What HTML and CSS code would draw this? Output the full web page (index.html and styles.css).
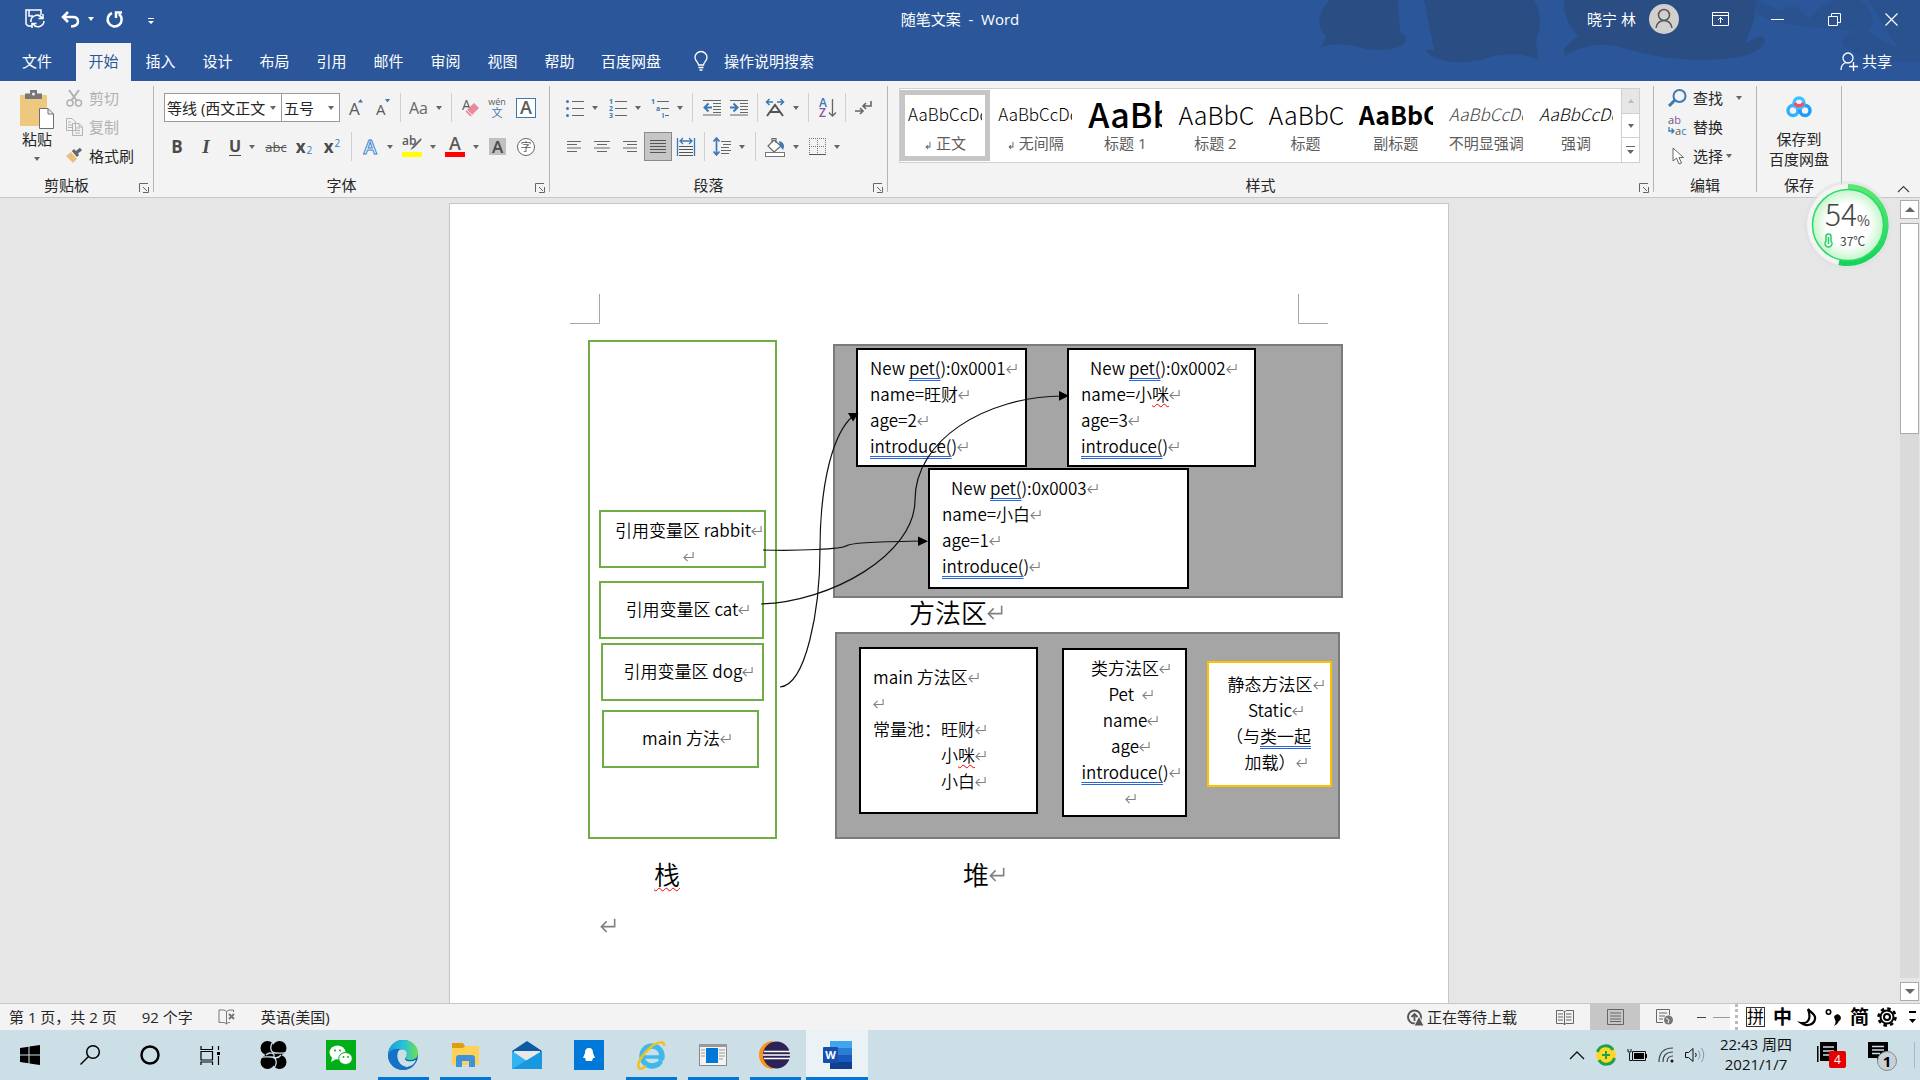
FILE: index.html
```html
<!DOCTYPE html>
<html lang="zh-CN">
<head>
  <meta charset="utf-8">
  <title>随笔文案 - Word</title>
  <link rel="stylesheet" href="styles.css">
</head>
<body>
  <svg class="defs" width="0" height="0">
    <symbol id="ret" viewBox="0 0 12 12"><path d="M11 0.500V6.500H1M5 2.500L1 6.500L5 10.500" fill="none" stroke="#808080" stroke-width="1.200"/></symbol>
    <symbol id="launch" viewBox="0 0 10 10"><path d="M0.500 9V0.500H9M4 4L8 8M9.500 4V9.500H4" fill="none" stroke="#666"/></symbol>
  </svg>

  <header class="header">
    <svg class="art" viewBox="1280 0 640 81" width="640" height="81">
      <path fill="#2a4d83" d="M1330 0C1316 14 1317 28 1326 36L1320 48Q1338 40 1366 49Q1392 52 1404 44Q1410 36 1400 32L1398 0zM1424 0L1434 50Q1420 48 1432 56Q1450 66 1480 60Q1515 48 1538 60L1536 40Q1545 20 1534 0zM1564 0Q1562 18 1578 36L1564 48L1565 56Q1590 40 1620 47Q1680 66 1740 57Q1766 50 1765 38Q1760 34 1745 44L1754 20L1756 0z"/>
      <path fill="#2a4f89" d="M1756 0L1780 10Q1800 0 1808 20Q1830 -8 1860 0Q1880 16 1868 32Q1880 40 1898 48L1900 58L1868 60L1842 45Q1842 34 1850 33L1860 32L1800 26Q1780 24 1756 14zM1868 0H1920V62H1890L1898 48z" opacity=".6"/>
    </svg>
    <div class="titlebar">
      <div class="quick">
        <button aria-label="保存"><svg width="20" height="20" viewBox="0 0 20 20" fill="none" stroke="#fff" stroke-width="1.5"><path d="M7 17H3L1 15V1H16V6M4 1V7H8M6 13a6 6 0 0 1 11-4M18 5V9.500H13.500M19 12a6 6 0 0 1-11 3M7 19V14.500H11.500"/></svg></button>
        <button class="undo" aria-label="撤消"><svg width="19" height="17" viewBox="0 0 19 17" fill="none" stroke="#fff" stroke-width="2.500"><path d="M7 1L2 6L7 11M2 6H12Q17 6 17 10.500T10 15.500"/></svg><i class="caret"></i></button>
        <button class="redo" aria-label="重复"><svg width="18" height="18" viewBox="0 0 18 18" fill="none" stroke="#fff" stroke-width="2.500"><path d="M6 3A7 7 0 1 0 13 4M10 8V2.500H16"/></svg></button>
        <button class="custom" aria-label="自定义快速访问工具栏"><svg width="6" height="7" viewBox="0 0 6 7"><path d="M0 0H6V1H0zM0 3H6L3 6z" fill="#fff"/></svg></button>
      </div>
      <h1 class="title">随笔文案&nbsp; -&nbsp; Word</h1>
      <div class="account">
        <span class="user">晓宁 林</span>
        <svg class="avatar" width="30" height="30" viewBox="0 0 30 30"><circle cx="15" cy="15" r="15" fill="#d2d0ce"/><g fill="none" stroke="#555" stroke-width="1.500"><circle cx="15" cy="11" r="5.500"/><path d="M7 24C8 14 22 14 23 24"/></g></svg>
        <button class="win" aria-label="功能区显示选项"><svg width="17" height="14" viewBox="0 0 17 14" fill="none" stroke="#fff"><path d="M0.500 0.500H16.500V13.500H0.500zM0.500 3.500H16.500M8.500 11V5.500M6 8L8.500 5.500L11 8"/></svg></button>
        <button class="win" aria-label="最小化"><svg width="13" height="13" viewBox="0 0 13 13"><path d="M0 6.500H13" stroke="#fff"/></svg></button>
        <button class="win" aria-label="还原"><svg width="13" height="13" viewBox="0 0 13 13" fill="none" stroke="#fff"><path d="M0.500 3.500H9.500V12.500H0.500zM3.500 3V0.500H12.500V9.500H10"/></svg></button>
        <button class="win" aria-label="关闭"><svg width="13" height="13" viewBox="0 0 13 13"><path d="M0.500 0.500L12.500 12.500M12.500 0.500L0.500 12.500" stroke="#fff" stroke-width="1.200"/></svg></button>
      </div>
    </div>
    <nav class="tabs">
      <button class="file">文件</button>
      <button class="tab active">开始</button>
      <button class="tab">插入</button>
      <button class="tab">设计</button>
      <button class="tab">布局</button>
      <button class="tab">引用</button>
      <button class="tab">邮件</button>
      <button class="tab">审阅</button>
      <button class="tab">视图</button>
      <button class="tab">帮助</button>
      <button class="tab long">百度网盘</button>
      <button class="tell"><svg width="14" height="20" viewBox="0 0 14 20" fill="none" stroke="#fff" stroke-width="1.300"><path d="M4.500 14C4.500 11 1 10 1 6.500A6 6 0 0 1 13 6.500C13 10 9.500 11 9.500 14zM4.500 16.500H9.500M5.500 19H8.500"/></svg>操作说明搜索</button>
      <button class="share"><svg width="18" height="19" viewBox="0 0 18 19" fill="none" stroke="#fff" stroke-width="1.300"><circle cx="8" cy="6" r="5"/><path d="M1 18C1 14 3 11.500 6 10.500M13.500 10V19M9 14.500H18"/></svg>共享</button>
    </nav>
  </header>

  <section class="ribbon">
    <div class="group clipboard">
      <div class="clip-body">
        <button class="paste">
          <svg width="34" height="39" viewBox="0 0 34 39"><rect y="5" width="27" height="31" rx="1" fill="#edc87e"/><path d="M5 9V3.500H10V0H17V3.500H22V9z" fill="#777"/><circle cx="13.500" cy="4" r="1.500" fill="#f3f3f3"/><path d="M19.500 18.500H28L33.500 24V38.500H19.500zM28 18.500V24H33.500" fill="#fff" stroke="#6f6f6f"/></svg>
          <span>粘贴</span>
          <i class="caret"></i>
        </button>
        <div class="stack">
          <button class="off"><svg width="17" height="18" viewBox="0 0 17 18" fill="none" stroke="#b1b1b1" stroke-width="1.500"><path d="M3 1L11 12M13 1L5 12" stroke-width="2"/><circle cx="4" cy="14" r="3"/><circle cx="12.500" cy="14" r="3"/></svg>剪切</button>
          <button class="off"><svg width="17" height="18" viewBox="0 0 17 18" fill="#f3f3f3" stroke="#b5b0b5"><path d="M0.500 0.500H6L9.500 4V12.500H0.500zM2 4H5M2 7H6M2 9.500H6M6.500 5.500H13L16.500 9V17.500H6.500zM13 5.500V9H16M9 10H14M9 12.500H14M9 15H14"/></svg>复制</button>
          <button><svg width="17" height="16" viewBox="0 0 17 16"><path d="M5 4L11 11L7 15L0 8z" fill="#edc07a"/><path d="M7 2L12 8" stroke="#666" stroke-width="3"/><path d="M10 5L15 1" stroke="#666" stroke-width="3.500"/></svg>格式刷</button>
        </div>
      </div>
      <div class="foot"><span>剪贴板</span><button aria-label="剪贴板设置"><svg width="10" height="10"><use href="#launch"/></svg></button></div>
    </div>
    <div class="divider"></div>

    <div class="group font">
      <div class="tools">
        <div class="row font-one">
          <select class="combo" aria-label="字体"><option>等线 (西文正文</option></select>
          <select class="combo size" aria-label="字号"><option>五号</option></select>
          <button><svg width="16" height="20" viewBox="0 0 16 20"><text x="1" y="17" class="g" font-size="17">A</text><path d="M10 4.500L12.500 1L15 4.500z" fill="#3b78b5"/></svg></button>
          <button><svg width="16" height="20" viewBox="0 0 16 20"><text x="1" y="17" class="g" font-size="15">A</text><path d="M10 1L12.500 4.500L15 1z" fill="#3b78b5"/></svg></button>
          <span class="line"></span>
          <button><span class="aa">Aa</span><i class="caret"></i></button>
          <span class="line"></span>
          <button><svg width="18" height="20" viewBox="0 0 18 20"><text x="0" y="12" class="g" font-size="14">A</text><path d="M12 5L17 10L8.500 18.500L3.500 13.500z" fill="#e9899a"/><path d="M5 12L10 17" stroke="#f3f3f3"/></svg></button>
          <button><svg width="20" height="20" viewBox="0 0 20 20"><text x="10" y="7" text-anchor="middle" class="g" font-size="9">wén</text><text x="10" y="19" text-anchor="middle" class="b" font-size="11">文</text></svg></button>
          <button><svg width="20" height="20" viewBox="0 0 20 20"><rect x=".5" y=".5" width="19" height="19" fill="#fff" stroke="#3b78b5"/><text x="10" y="16" text-anchor="middle" class="g" font-weight="600" font-size="18">A</text></svg></button>
        </div>
        <div class="row font-two">
          <button class="bold">B</button>
          <button class="italic">I</button>
          <button><span class="under">U</span><i class="caret"></i></button>
          <button class="strike">abc</button>
          <button class="script">x<sub>2</sub></button>
          <button class="script">x<sup>2</sup></button>
          <span class="line"></span>
          <button><svg width="18" height="20" viewBox="0 0 18 20"><text x="9" y="17" text-anchor="middle" font-family="Open Sans" font-weight="600" font-size="20" fill="#fff" stroke="#3b85cf">A</text></svg><i class="caret"></i></button>
          <button><svg width="20" height="21" viewBox="0 0 20 21"><text x="0" y="9" class="g" font-size="12" font-weight="600">ab</text><path d="M19 2L11 10L8 14L12 12L19.500 4z" fill="#666"/><rect y="16" width="20" height="5" fill="#ff0"/></svg><i class="caret"></i></button>
          <button><svg width="20" height="21" viewBox="0 0 20 21"><text x="10" y="14" text-anchor="middle" class="g" font-weight="600" font-size="18">A</text><rect y="16" width="20" height="5" fill="red"/></svg><i class="caret"></i></button>
          <button class="shade">A</button>
          <button><svg width="18" height="18" viewBox="0 0 18 18"><circle cx="9" cy="9" r="8.500" fill="#fff" stroke="#666"/><text x="9" y="13" text-anchor="middle" class="g" font-size="11">字</text></svg></button>
        </div>
      </div>
      <div class="foot"><span>字体</span><button aria-label="字体设置"><svg width="10" height="10"><use href="#launch"/></svg></button></div>
    </div>
    <div class="divider"></div>

    <div class="group para">
      <div class="tools">
        <div class="row para-one">
          <button><svg width="18" height="18" viewBox="0 0 18 18"><path d="M6 2.500H18M6 9.500H18M6 16.500H18" stroke="#666"/><g fill="#3b78b5"><circle cx="1.500" cy="2.500" r="1.500"/><circle cx="1.500" cy="9.500" r="1.500"/><circle cx="1.500" cy="16.500" r="1.500"/></g></svg><i class="caret"></i></button>
          <button><svg width="18" height="20" viewBox="0 0 18 20"><path d="M6 3.500H18M6 10.500H18M6 17.500H18" stroke="#666"/><g class="b" font-size="7" font-weight="700"><text x="0" y="6">1</text><text x="0" y="13">2</text><text x="0" y="20">3</text></g></svg><i class="caret"></i></button>
          <button><svg width="18" height="20" viewBox="0 0 18 20"><path d="M6 3.500H18M10 10.500H18M14 17.500H18" stroke="#666"/><g class="b" font-size="7" font-weight="700"><text x="0" y="6">1</text><text x="5" y="13">a</text><text x="11" y="20">i</text></g></svg><i class="caret"></i></button>
          <span class="line"></span>
          <button><svg width="18" height="17" viewBox="0 0 18 17"><path d="M0 1.500H18M10 4.500H18M10 7.500H18M10 10.500H18M10 13.500H18M0 16H18" stroke="#666"/><path d="M9 8.500H2M5.500 4.500L1.500 8.500L5.500 12.500" fill="none" stroke="#3b78b5" stroke-width="2"/></svg></button>
          <button><svg width="18" height="17" viewBox="0 0 18 17"><path d="M0 1.500H18M10 4.500H18M10 7.500H18M10 10.500H18M10 13.500H18M0 16H18" stroke="#666"/><path d="M0 8.500H7M3.500 4.500L7.500 8.500L3.500 12.500" fill="none" stroke="#3b78b5" stroke-width="2"/></svg></button>
          <span class="line"></span>
          <button><svg width="20" height="18" viewBox="0 0 20 18"><path d="M8 3H2M4.500 0L1.500 3L4.500 6M12 3H18M15.500 0L18.500 3L15.500 6" fill="none" stroke="#3b78b5" stroke-width="1.500"/><path d="M2 17L10 6L18 17M5 13H15" fill="none" stroke="#555" stroke-width="2"/></svg><i class="caret"></i></button>
          <span class="line"></span>
          <button><svg width="18" height="20" viewBox="0 0 18 20"><text x="0" y="9" class="b" font-weight="600" font-size="12">A</text><text x="0" y="19" class="v" font-weight="600" font-size="12">Z</text><path d="M13.500 1V18M10 14.500L13.500 18L17 14.500" fill="none" stroke="#666" stroke-width="1.300"/></svg></button>
          <span class="line"></span>
          <button><svg width="17" height="16" viewBox="0 0 17 16" fill="none" stroke="#666" stroke-width="1.600"><path d="M16 1V6H8M11 3L8 6L11 9M0 11H8M5 8L8 11L5 14"/></svg></button>
        </div>
        <div class="row para-two">
          <button><svg width="14" height="11" viewBox="0 0 14 11"><path d="M0 .5H14M0 3.500H10M0 7H14M0 10.500H10" stroke="#666"/></svg></button>
          <button><svg width="16" height="11" viewBox="0 0 16 11"><path d="M0 .5H16M3 3.500H13M0 7H16M3 10.500H13" stroke="#666"/></svg></button>
          <button><svg width="14" height="11" viewBox="0 0 14 11"><path d="M0 .5H14M4 3.500H14M0 7H14M4 10.500H14" stroke="#666"/></svg></button>
          <button class="pressed"><svg width="16" height="13" viewBox="0 0 16 13"><path d="M0 .5H16M0 3.500H16M0 6.500H16M0 9.500H16M0 12.500H16" stroke="#555"/></svg></button>
          <button><svg width="18" height="19" viewBox="0 0 18 19"><path d="M.5 1V19M17.500 1V19M3 4H15M6 1L3 4L6 7M12 1L15 4L12 7" fill="none" stroke="#3b78b5" stroke-width="1.300"/><path d="M2 9.500H16M2 12.500H16M2 15.500H16M2 18.500H16" stroke="#555"/></svg></button>
          <span class="line"></span>
          <button><svg width="18" height="19" viewBox="0 0 18 19"><path d="M3.500 1V18M.5 4.500L3.500 1L6.500 4.500M.5 14.500L3.500 18L6.500 14.500" fill="none" stroke="#3b78b5" stroke-width="1.700"/><path d="M8 4.500H18M10 7.500H18M8 10.500H16M8 13.500H18M8 16.500H16" stroke="#666"/></svg><i class="caret"></i></button>
          <span class="line"></span>
          <button><svg width="20" height="20" viewBox="0 0 20 20"><path d="M9 3L16 9L9 15L3 9zM7 6V1.500H11V6" fill="#fff" stroke="#666" stroke-width="1.200"/><path d="M14 4C19 5 20 9 18 13L15 9z" fill="#3b78b5"/><rect x=".5" y="15.500" width="19" height="4" fill="#fff" stroke="#777"/></svg><i class="caret"></i></button>
          <button><svg width="17" height="17" viewBox="0 0 17 17"><path d="M.5 0V16M8.500 0V16M16.500 0V16M0 .5H17M0 8.500H17" stroke="#777" stroke-dasharray="1 1"/><path d="M0 16.500H17" stroke="#555"/></svg><i class="caret"></i></button>
        </div>
      </div>
      <div class="foot"><span>段落</span><button aria-label="段落设置"><svg width="10" height="10"><use href="#launch"/></svg></button></div>
    </div>
    <div class="divider"></div>

    <div class="group styles">
      <div class="gallery">
        <button class="style chosen"><span class="sample">AaBbCcDd</span><span class="cap"><small>↲</small> 正文</span></button>
        <button class="style"><span class="sample">AaBbCcDd</span><span class="cap"><small>↲</small> 无间隔</span></button>
        <button class="style"><span class="sample huge">AaBb</span><span class="cap">标题 1</span></button>
        <button class="style"><span class="sample large">AaBbC</span><span class="cap">标题 2</span></button>
        <button class="style"><span class="sample large">AaBbC</span><span class="cap">标题</span></button>
        <button class="style"><span class="sample large strong">AaBbC</span><span class="cap">副标题</span></button>
        <button class="style"><span class="sample slant pale">AaBbCcDd</span><span class="cap">不明显强调</span></button>
        <button class="style"><span class="sample slant">AaBbCcDd</span><span class="cap">强调</span></button>
        <div class="pager">
          <button class="dim" aria-label="上一行"><i class="caret up"></i></button>
          <button aria-label="下一行"><i class="caret"></i></button>
          <button aria-label="其他"><svg width="9" height="8" viewBox="0 0 9 8"><path d="M0 0H9V1H0zM1 4H8L4.500 8z" fill="#666"/></svg></button>
        </div>
      </div>
      <div class="foot"><span>样式</span><button aria-label="样式设置"><svg width="10" height="10"><use href="#launch"/></svg></button></div>
    </div>
    <div class="divider"></div>

    <div class="group editing">
      <div class="stack">
        <button><svg width="19" height="18" viewBox="0 0 19 18" fill="none" stroke="#3b78b5"><circle cx="11.500" cy="7" r="6" stroke-width="2"/><path d="M7 11L1 17" stroke-width="3"/></svg>查找<i class="caret wide"></i></button>
        <button><svg width="19" height="19" viewBox="0 0 19 19"><text x="0" y="7" class="g" font-size="11">a<tspan fill="#8e50a5">b</tspan></text><text x="7" y="18" class="g" font-size="11">a<tspan fill="#3b78b5">c</tspan></text><path d="M1 10V14H6M3.500 11.500L6 14L3.500 16.500" fill="none" stroke="#3b78b5" stroke-width="1.300"/></svg>替换</button>
        <button><svg width="19" height="18" viewBox="0 0 19 18"><path d="M5 1V14L8.500 11L11 17L13.500 16L11 10.500H15.500z" fill="#fff" stroke="#666"/></svg>选择<i class="caret near"></i></button>
      </div>
      <div class="foot"><span>编辑</span></div>
    </div>
    <div class="divider"></div>

    <div class="group netdisk">
      <button class="save">
        <svg width="26" height="22" viewBox="0 0 26 22" fill="none" stroke-width="3.500"><circle cx="7" cy="14.500" r="5" stroke="#2fb3fa"/><circle cx="19" cy="14.500" r="5" stroke="#1c9cff"/><circle cx="13" cy="7" r="5" stroke="#3cc3ff"/><path d="M8.500 7A5 5 0 0 0 17.500 7" stroke="#f4506e"/></svg>
        <span>保存到</span>
        <span>百度网盘</span>
      </button>
      <div class="foot"><span>保存</span></div>
    </div>
    <div class="divider"></div>
    <div class="tail"><button aria-label="折叠功能区"><svg width="13" height="8" viewBox="0 0 13 8"><path d="M1 7L6.500 1.500L12 7" fill="none" stroke="#444" stroke-width="1.200"/></svg></button></div>
  </section>

  <main class="workspace">
    <div class="desk">
      <article class="page">
        <div class="shape green stack-area"></div>
        <div class="shape green rabbit"><p>引用变量区 rabbit<svg class="ret"><use href="#ret"/></svg></p><p><svg class="ret"><use href="#ret"/></svg></p></div>
        <div class="shape green cat"><p>引用变量区 cat<svg class="ret"><use href="#ret"/></svg></p></div>
        <div class="shape green dog"><p>引用变量区 dog<svg class="ret"><use href="#ret"/></svg></p></div>
        <div class="shape green main-fn"><p>main 方法<svg class="ret"><use href="#ret"/></svg></p></div>

        <div class="shape gray heap-top"></div>
        <div class="shape black pet-one">
          <p>New <u>pet(</u>):0x0001<svg class="ret"><use href="#ret"/></svg></p>
          <p>name=旺财<svg class="ret"><use href="#ret"/></svg></p>
          <p>age=2<svg class="ret"><use href="#ret"/></svg></p>
          <p><u>introduce(</u>)<svg class="ret"><use href="#ret"/></svg></p>
        </div>
        <div class="shape black pet-two">
          <p class="pad">New <u>pet(</u>):0x0002<svg class="ret"><use href="#ret"/></svg></p>
          <p>name=小<s>咪</s><svg class="ret"><use href="#ret"/></svg></p>
          <p>age=3<svg class="ret"><use href="#ret"/></svg></p>
          <p><u>introduce(</u>)<svg class="ret"><use href="#ret"/></svg></p>
        </div>
        <div class="shape black pet-three">
          <p class="pad">New <u>pet(</u>):0x0003<svg class="ret"><use href="#ret"/></svg></p>
          <p>name=小白<svg class="ret"><use href="#ret"/></svg></p>
          <p>age=1<svg class="ret"><use href="#ret"/></svg></p>
          <p><u>introduce(</u>)<svg class="ret"><use href="#ret"/></svg></p>
        </div>

        <div class="shape gray heap-bottom"></div>
        <div class="shape black main-area">
          <p>main 方法区<svg class="ret"><use href="#ret"/></svg></p>
          <p><svg class="ret"><use href="#ret"/></svg></p>
          <p>常量池：旺财<svg class="ret"><use href="#ret"/></svg></p>
          <p class="deep">小<s>咪</s><svg class="ret"><use href="#ret"/></svg></p>
          <p class="deep">小白<svg class="ret"><use href="#ret"/></svg></p>
        </div>
        <div class="shape black class-area">
          <p>类方法区<svg class="ret"><use href="#ret"/></svg></p>
          <p>Pet&nbsp; <svg class="ret"><use href="#ret"/></svg></p>
          <p>name<svg class="ret"><use href="#ret"/></svg></p>
          <p>age<svg class="ret"><use href="#ret"/></svg></p>
          <p><u>introduce(</u>)<svg class="ret"><use href="#ret"/></svg></p>
          <p><svg class="ret"><use href="#ret"/></svg></p>
        </div>
        <div class="shape gold static-area">
          <p>静态方法区<svg class="ret"><use href="#ret"/></svg></p>
          <p>Static<svg class="ret"><use href="#ret"/></svg></p>
          <p class="wrapped">（与<u>类一起</u></p>
          <p>加载）<svg class="ret"><use href="#ret"/></svg></p>
        </div>

        <p class="big method-label">方法区<svg class="ret"><use href="#ret"/></svg></p>
        <p class="big stack-label"><s>栈</s></p>
        <p class="big heap-label">堆<svg class="ret"><use href="#ret"/></svg></p>
        <p class="big last-mark"><svg class="ret"><use href="#ret"/></svg></p>

        <!-- margin corners and connectors -->
        <svg class="links" width="998" height="799" viewBox="450 204 998 799">
          <path d="M599.500 294V323.500H570M1298.500 294V323.500H1328" fill="none" stroke="#a6a6a6"/>
          <g fill="none" stroke="#111" stroke-width="1.200">
            <path d="M763 550C800 551 842 549 846 546S870 542 920 541"/>
            <path d="M761 604C830 602 915 555 915 500C915 440 985 397 1062 396"/>
            <path d="M780 687C806 685 820 610 820 550C820 480 834 432 853 416"/>
          </g>
          <path d="M918 536.500V546L928 541.300zM1059 391V400.700L1069 395.700zM848 413H858.500L853 421.500z" fill="#000"/>
        </svg>
      </article>
    </div>
    <div class="scroll">
      <button aria-label="向上滚动"><i class="caret up"></i></button>
      <div class="track"><div class="thumb"></div></div>
      <button aria-label="向下滚动"><i class="caret"></i></button>
    </div>
    <div class="ball">
      <svg width="90" height="90" viewBox="0 0 90 90">
        <defs>
          <radialGradient id="glow"><stop offset=".6" stop-color="#fff"/><stop offset="1" stop-color="#c5f5cb"/></radialGradient>
          <linearGradient id="arc" x2="0" y2="1"><stop offset="0" stop-color="#5be872"/><stop offset="1" stop-color="#14d45c"/></linearGradient>
        </defs>
        <circle cx="45" cy="45" r="44" fill="#dedede" opacity=".5"/>
        <circle cx="45" cy="45" r="41" fill="#f4f4f4"/>
        <path d="M45 7A38 38 0 1 1 36 82" fill="none" stroke="url(#arc)" stroke-width="6"/>
        <circle cx="45" cy="45" r="35.500" fill="url(#glow)" stroke="#2bdc69" stroke-width="1.500"/>
        <path d="M23 56.500a2.500 2.500 0 0 1 5 0V61a3.500 3.500 0 1 1-5 0zM25.500 57V64" fill="none" stroke="#2bcc63" stroke-width="1.500"/>
      </svg>
      <span class="load">54<small>%</small></span>
      <span class="temp">37℃</span>
    </div>
  </main>

  <footer class="status">
    <span>第 1 页，共 2 页</span>
    <span>92 个字</span>
    <svg width="18" height="16" viewBox="0 0 18 16" fill="none" stroke="#777"><path d="M8.500 2V15M8.500 2.500Q7 .5 1 1V13.500Q7 13 8.500 15Q10 13 12 13.500M8.500 2.500Q10 .5 15.500 1V3"/><path d="M11 5L16 10M16 5L11 10" stroke-width="2"/></svg>
    <span>英语(美国)</span>
    <div class="status-right">
      <span class="upload"><svg width="17" height="17" viewBox="0 0 17 17"><circle cx="7.500" cy="8" r="6.500" fill="none" stroke="#555" stroke-width="2"/><path d="M7.500 12V5M4.500 8L7.500 5L10.500 8" fill="none" stroke="#555" stroke-width="1.800"/><path d="M12 7L17 17H7z" fill="#555" stroke="#f3f3f3"/></svg>正在等待上载</span>
      <button class="view" aria-label="阅读视图"><svg width="18" height="15" viewBox="0 0 18 15" fill="none" stroke="#666"><path d="M8.500 1V15M.5 .5H7L8.500 2L10 .5H17.500V13.500H10L8.500 14.500L7 13.500H.5zM2 4H7M2 7H7M2 10H7M10 4H15.500M10 7H15.500M10 10H15.500"/></svg></button>
      <button class="view on" aria-label="页面视图"><svg width="17" height="16" viewBox="0 0 17 16" fill="none" stroke="#666"><path d="M.5 .5H16.500V15.500H.5zM3 4H14M3 7H14M3 10H14M3 12.500H14"/></svg></button>
      <button class="view" aria-label="Web 版式视图"><svg width="18" height="16" viewBox="0 0 18 16"><path d="M.5 .5H13.500V6M.5 .5V13.500H7M3 4H11M3 7H9M3 10H7" fill="none" stroke="#666"/><circle cx="12.500" cy="11" r="4.500" fill="#777"/><path d="M10 9L13 11L12 14" fill="none" stroke="#f3f3f3"/></svg></button>
      <button class="zoom-out" aria-label="缩小"></button>
      <span class="zoom-line"></span>
      <div class="ime">
        <span class="grip"></span>
        <span class="pin">拼</span>
        <span>中</span>
        <svg width="17" height="19" viewBox="0 0 17 19"><path d="M8 1C11 5 16 6 15 11C14 17 6 19 1 15C7 16 12 12 8 1z" fill="none" stroke="#000" stroke-width="2.200"/></svg>
        <svg width="17" height="19" viewBox="0 0 17 19"><circle cx="3.500" cy="4" r="2.200" fill="none" stroke="#000" stroke-width="1.600"/><path d="M9 9a3.500 3.500 0 1 1 5 4Q13 16 9 18Q11 15 10.500 13z"/></svg>
        <span>简</span>
        <svg width="20" height="20" viewBox="0 0 20 20" fill="none" stroke="#000"><circle cx="10" cy="10" r="6.500" stroke-width="2"/><circle cx="10" cy="10" r="8.500" stroke-width="2.500" stroke-dasharray="3.500 3.170"/><circle cx="10" cy="10" r="3" stroke-width="2"/></svg>
        <svg class="more" width="7" height="14" viewBox="0 0 7 14"><path d="M0 1H7V3H0zM0 9H7L3.500 13z"/></svg>
      </div>
    </div>
  </footer>

  <footer class="taskbar">
    <button class="sys" aria-label="开始"><svg width="20" height="20" viewBox="0 0 20 20"><path d="M0 3L8.500 1.700V9.500H0zM9.500 1.500L20 0V9.500H9.500zM0 10.500H8.500V18.300L0 17zM9.500 10.500H20V20L9.500 18.500z"/></svg></button>
    <button class="sys" aria-label="搜索"><svg width="20" height="20" viewBox="0 0 20 20" fill="none" stroke="#000" stroke-width="1.500"><circle cx="13" cy="7" r="6.300"/><path d="M8.500 11.500L.5 19.500"/></svg></button>
    <button class="sys" aria-label="Cortana"><svg width="20" height="20" viewBox="0 0 20 20"><circle cx="10" cy="10" r="8.500" fill="none" stroke="#000" stroke-width="2.500"/></svg></button>
    <button class="sys" aria-label="任务视图"><svg width="20" height="19" viewBox="0 0 20 19" fill="none" stroke="#000" stroke-width="1.200"><path d="M1 0V3.500H12.500V0M1 5.500H12.500V14H1zM1 19V16H12.500V19M18.500 0V4M18.500 10V19"/><path d="M18.500 6V9" stroke-width="3"/></svg></button>
    <button class="knot" aria-label="驱动"><svg width="27" height="28" viewBox="0 0 27 28"><circle cx="7.500" cy="7" r="7"/><circle cx="19.500" cy="7" r="7"/><circle cx="7.500" cy="21" r="7"/><circle cx="19.500" cy="21" r="7"/><path d="M5 5H22V23H5z"/><path d="M14 0C9 5 10 12 16 12C20 12 24 13 27 11M13 28C18 23 17 16 11 16C7 16 3 15 0 17M6 14C10 10 15 13 14 15C13 17 18 18 21 14" fill="none" stroke="#cddfe6" stroke-width="1.300"/></svg></button>
    <button class="app" aria-label="微信"><svg width="30" height="30" viewBox="0 0 30 30"><rect width="30" height="30" fill="#00af17"/><ellipse cx="11.500" cy="12.500" rx="8" ry="7" fill="#fff"/><path d="M6 18L5 22L10 19z" fill="#fff"/><ellipse cx="19.500" cy="18.500" rx="6.800" ry="6" fill="#fff" stroke="#00af17"/><g fill="#00af17"><circle cx="9" cy="10.500" r="1"/><circle cx="14" cy="10.500" r="1"/><circle cx="17.500" cy="17" r=".9"/><circle cx="22" cy="17" r=".9"/></g></svg></button>
    <button class="app open" aria-label="Edge"><svg width="30" height="30" viewBox="0 0 30 30"><defs><linearGradient id="edge"><stop offset="0" stop-color="#1a9cdf"/><stop offset=".55" stop-color="#2cc3d5"/><stop offset="1" stop-color="#6fe04b"/></linearGradient></defs><circle cx="15" cy="15" r="15" fill="#0c64b8"/><path d="M0 14C1 5 8 0 15 0C24 0 30 6 30 13C30 18 26 20 22 20C18 20 17 18 18 17C20 12 16 9 11 9C5 9 1 12 0 15z" fill="url(#edge)"/><path d="M11 10C18 8 20 13 18 17C15 20 20 23 28 20C26 25 22 27 18 27C10 26 7 15 11 10z" fill="#cddfe6"/><path d="M0 15C3 8 9 9 11 10C6 14 9 25 18 27C22 27 26 25 28 21C26 27 21 30 15 30C7 30 0 24 0 15z" fill="#1472c7"/></svg></button>
    <button class="app open" aria-label="文件资源管理器"><svg width="28" height="24" viewBox="0 0 28 24"><path d="M1 0H12L14 3H27V22H1z" fill="#e09c12"/><path d="M1 5H12L14 3H28V22H1z" fill="#ffd257"/><path d="M5 24V15Q5 12 8 12H21Q24 12 24 15V24H18V18H11V24z" fill="#3c93dc"/></svg></button>
    <button class="app" aria-label="邮件"><svg width="30" height="28" viewBox="0 0 30 28"><path d="M0 10L15 0L30 10V18H0z" fill="#0c59a4"/><path d="M2 10H28V20H2z" fill="#e8e8e8"/><path d="M0 10L15 20L30 10V28H0z" fill="#33b4f0"/><path d="M0 28L30 10V28z" fill="#1898e0"/></svg></button>
    <button class="app" aria-label="QQ"><svg width="30" height="30" viewBox="0 0 30 30"><rect width="30" height="30" fill="#0078d7"/><path d="M15 8C18 8 19 10 19 13L21 18L19 18L18 21H12L11 18H9L11 13C11 10 12 8 15 8z" fill="#fff"/></svg></button>
    <button class="app open" aria-label="Internet Explorer"><svg width="30" height="30" viewBox="0 0 30 30" fill="none"><circle cx="16" cy="16" r="10" stroke="#3fb8ec" stroke-width="5.500"/><path d="M7 17H27" stroke="#3fb8ec" stroke-width="3.500"/><path d="M17 20H29V23L22 22z" fill="#cddfe6"/><path d="M22 22Q25 22 26 20" stroke="#3fb8ec" stroke-width="3"/><path d="M28 6C29 1 22 1 15 7C7 13 0 24 3 28Q5 30 10 26" stroke="#f2c11c" stroke-width="2.500"/></svg></button>
    <button class="app open" aria-label="窗口"><svg width="28" height="22" viewBox="0 0 28 22"><rect x=".5" y=".5" width="27" height="21" fill="#f3f3f3" stroke="#888"/><path d="M0 0H28V3H0z" fill="#999"/><rect x="7" y="4" width="12" height="15" fill="#0078d7"/><path d="M2 6H6M2 9H6M2 12H6M20 6H26M20 9H26M20 12H26M20 15H24" stroke="#999"/></svg></button>
    <button class="app open" aria-label="Eclipse"><svg width="30" height="28" viewBox="0 0 30 28"><path d="M13 0A14 14 0 0 0 13 28Q4 14 13 0z" fill="#f7941e"/><circle cx="16.500" cy="14" r="13.500" fill="#2c2255"/><path d="M4 10.500H30M3 14H30M4 17.500H30" stroke="#fff" stroke-width="1.600"/></svg></button>
    <button class="app open current" aria-label="Word"><svg width="29" height="28" viewBox="0 0 29 28"><path d="M7 0H29V7H7z" fill="#41a5ee"/><path d="M7 7H29V14H7z" fill="#2b7cd3"/><path d="M7 14H29V21H7z" fill="#185abd"/><path d="M7 21H29V28H7z" fill="#103f91"/><rect y="6" width="15" height="16" rx="1" fill="#174fb0"/><text x="7.500" y="18" text-anchor="middle" font-family="Open Sans" font-size="11" font-weight="700" fill="#fff">W</text></svg></button>

    <div class="tray">
      <svg width="16" height="10" viewBox="0 0 16 10"><path d="M1 9L8 2L15 9" fill="none" stroke="#111" stroke-width="1.300"/></svg>
      <svg width="20" height="20" viewBox="0 0 20 20"><circle cx="10" cy="10" r="10" fill="#ffd72b"/><path d="M1.500 7A8.500 8.500 0 0 1 17 5M18.500 13A8.500 8.500 0 0 1 3 15" fill="none" stroke="#1ba34c" stroke-width="3"/><path d="M10 6V14M6 10H14" stroke="#1ba34c" stroke-width="2"/></svg>
      <svg width="20" height="14" viewBox="0 0 20 14"><path d="M5.500 3.500H18.500V12.500H5.500zM2.500 5V12.500H5M1 1V4H4V1" fill="none" stroke="#111"/><path d="M7 5H17V11H7zM18.500 6H20V10H18.500z"/></svg>
      <svg width="16" height="16" viewBox="0 0 16 16" fill="none" stroke="#444" stroke-width="1.200"><path d="M1 15Q1 1 15 1M5 15Q5 5 15 5M9 15Q9 9 15 9"/><circle cx="14" cy="14" r="1.500" fill="#111" stroke="none"/></svg>
      <svg width="20" height="16" viewBox="0 0 20 16" fill="none" stroke="#111"><path d="M.5 5.500H3.500L8 1.500V14.500L3.500 10.500H.5zM10.500 6Q12 8 10.500 10"/><path d="M13.500 3.500Q16.500 8 13.500 12.500M16.500 1Q21 8 16.500 15" stroke="#8a999f"/></svg>
      <time class="clock"><span>22:43 周四</span><span>2021/1/7</span></time>
      <div class="note"><svg width="30" height="26" viewBox="0 0 30 26"><path d="M3 0H20V19H3zM0 4H1.500V20H0z"/><path d="M6 5H17M6 9H17M6 13H13" stroke="#cddfe6" stroke-width="1.500"/></svg><span class="badge">4</span></div>
      <div class="note last"><svg width="30" height="26" viewBox="0 0 30 26"><path d="M0 0H20V16H12L9 19V16H0z"/><path d="M4 4.500H16M4 8H16M4 11.500H12" stroke="#cddfe6" stroke-width="1.500"/></svg><span class="badge round">1</span></div>
    </div>
  </footer>
</body>
</html>
```

FILE: styles.css
```css
* {
  box-sizing: border-box;
}

body {
  margin: 0;
  height: 100vh;
  display: flex;
  flex-direction: column;
  overflow: hidden;
  font-family: "Open Sans", "Noto Sans CJK SC", sans-serif;
  font-size: 15px;
  line-height: 20px;
  color: #262626;
  background-color: #e6e6e6;
}

button {
  border: 0;
  padding: 0;
  background: none;
  font: inherit;
  color: inherit;
}

p, h1 {
  margin: 0;
}

svg {
  overflow: visible;
}

.defs {
  position: absolute;
}

.caret {
  flex: none;
  border: 3px solid transparent;
  border-top: 4px solid #666;
  border-bottom: 0;
}

.caret.up {
  border-top: 0;
  border-bottom: 4px solid #bbb;
}

/* header */
.header {
  position: relative;
  flex: none;
  background-color: #2b579a;
  color: #fff;
}

.art {
  position: absolute;
  right: 0;
  top: 0;
  overflow: hidden;
}

.titlebar {
  position: relative;
  display: grid;
  grid-template-columns: 1fr auto 1fr;
  align-items: center;
  height: 38px;
  margin-bottom: 5px;
}

.title {
  font-size: 15px;
  font-weight: 400;
}

.quick {
  display: flex;
  align-items: center;
  padding-left: 25px;
}

.quick button {
  display: flex;
  align-items: center;
  gap: 8px;
}

.quick .caret {
  border-top-color: #fff;
}

.quick .undo {
  margin-left: 16px;
}

.quick .redo {
  margin-left: 12px;
}

.quick .custom {
  margin: 4px 0 0 24px;
}

.account {
  display: flex;
  align-items: center;
  justify-content: flex-end;
}

.avatar {
  margin: 0 13px 0 13px;
}

.win {
  width: 57px;
  height: 38px;
  display: grid;
  place-items: center;
}

.tabs {
  position: relative;
  display: flex;
  gap: 2px;
  height: 38px;
}

.tabs button {
  padding-bottom: 2px;
}

.file {
  width: 74px;
}

.tab {
  width: 55px;
}

.tab.active {
  background-color: #f3f3f3;
  color: #2b579a;
}

.tab.long {
  width: 84px;
}

.tell, .share {
  display: flex;
  align-items: center;
}

.tell {
  gap: 16px;
  margin-left: 19px;
}

.share {
  gap: 4px;
  margin: 0 28px 0 auto;
}

/* ribbon */
.ribbon {
  flex: none;
  display: flex;
  height: 117px;
  background-color: #f3f3f3;
  border-bottom: 1px solid #c6c6c6;
}

.divider {
  width: 1px;
  margin: 5px 0;
  background-color: #b5b5b5;
}

.group {
  display: flex;
  flex-direction: column;
  justify-content: space-between;
}

.foot {
  display: flex;
  align-items: center;
  justify-content: center;
  position: relative;
  height: 22px;
  padding-bottom: 2px;
}

.foot button {
  position: absolute;
  right: 4px;
  top: 8px;
  display: flex;
}

.clipboard .foot, .font .foot, .para .foot, .styles .foot {
  padding-right: 20px;
}

.clipboard {
  width: 153px;
}

.clip-body {
  display: flex;
  gap: 10px;
  padding-left: 18px;
}

.paste {
  display: flex;
  flex-direction: column;
  align-items: center;
  width: 38px;
  padding-top: 9px;
}

.paste .caret {
  margin-top: 8px;
}

.stack {
  display: flex;
  flex-direction: column;
  padding-top: 2px;
}

.stack button {
  display: flex;
  align-items: center;
  gap: 6px;
  height: 29px;
}

.stack .off {
  color: #b1b1b1;
}

.font {
  width: 395px;
}

.para {
  width: 337px;
}

.tools {
  display: flex;
  flex-direction: column;
  gap: 10px;
  padding: 12px 0 0 10px;
}

.row {
  display: grid;
  height: 29px;
}

.row button {
  display: flex;
  align-items: center;
  justify-content: center;
  gap: 8px;
}

.font-one {
  grid-template-columns: 118px 58px 32px 22px 12px 39px 12px 28px 24px 34px;
}

.font-two {
  grid-template-columns: 26px 32px 40px 28px 28px 28px 10px 42px 42px 44px 27px 30px;
}

.para-one {
  grid-template-columns: 43px 43px 41px 11px 27px 28px 9px 40px 13px 25px 11px 25px;
}

.para-two {
  grid-template-columns: 28px 28px 28px 28px 28px 8px 42px 10px 43px 42px;
}

.line {
  justify-self: center;
  width: 1px;
  background-color: #d0d0d0;
}

.combo {
  appearance: none;
  min-width: 0;
  border: 1px solid #9a9a9a;
  border-radius: 0;
  padding: 0 12px 0 2px;
  font: inherit;
  color: #262626;
  background: #fff url("data:image/svg+xml,%3Csvg xmlns='http://www.w3.org/2000/svg' width='6' height='4'%3E%3Cpath d='M0 0H6L3 4z' fill='%23666'/%3E%3C/svg%3E") no-repeat right 5px center;
}

.combo.size {
  border-left: 0;
}

.g, .b, .v {
  font-family: "Open Sans", "Noto Sans CJK SC", sans-serif;
  fill: #5a5a5a;
}

.b {
  fill: #3b78b5;
}

.v {
  fill: #8e50a5;
}

.row .aa {
  font-size: 16px;
  color: #666;
}

.bold, .italic, .under, .script, .shade {
  color: #4a4a4a;
  font-weight: 700;
  font-size: 16px;
}

.row .bold, .row .script, .row .italic {
  font-size: 17px;
  font-weight: 700;
}

.row .italic {
  font-family: "Liberation Serif", serif;
  font-style: italic;
  font-size: 19px;
}

.under {
  border-bottom: 1px solid #4a4a4a;
  line-height: 18px;
}

.row .strike {
  font-size: 13px;
  color: #555;
  text-decoration: line-through;
}

.row .script {
  gap: 1px;
}

.script sub, .script sup {
  font-size: 10px;
  font-weight: 400;
  color: #3b78b5;
}

.script sub {
  padding-top: 6px;
}

.script sup {
  padding-bottom: 8px;
}

.row .shade {
  align-self: center;
  justify-self: center;
  width: 17px;
  height: 17px;
  font-size: 17px;
  font-weight: 600;
  background-color: #c0c0c0;
}

.pressed {
  background-color: #c6c6c6;
  outline: 1px solid #8a8a8a;
  outline-offset: -1px;
}

.styles {
  flex: 1;
  min-width: 0;
}

.gallery {
  display: flex;
  height: 75px;
  margin: 7px 13px 0 11px;
  border: 1px solid #d0d0d0;
  background-color: #fff;
}

.style {
  flex: 1;
  min-width: 0;
  height: 71px;
  margin-top: 1px;
  border: 5px solid transparent;
  padding: 0 3px;
  display: flex;
  flex-direction: column;
}

.style.chosen {
  border-color: #c6c6c6;
}

.sample {
  width: 100%;
  height: 38px;
  line-height: 38px;
  overflow: hidden;
  white-space: nowrap;
  text-align: left;
  font-family: "Noto Sans CJK SC", sans-serif;
  font-weight: 300;
  font-size: 17px;
  color: #000;
}

.sample.large {
  font-size: 25px;
}

.sample.huge {
  font-size: 34px;
  font-weight: 500;
}

.sample.strong {
  font-weight: 700;
}

.sample.slant {
  font-style: italic;
}

.sample.pale {
  color: #404040;
}

.cap {
  width: 100%;
  text-align: center;
  white-space: nowrap;
  color: #5c5c5c;
}

.cap small {
  font-size: 10px;
}

.pager {
  width: 18px;
  display: flex;
  flex-direction: column;
  border-left: 1px solid #d0d0d0;
}

.pager button {
  flex: 1;
  display: grid;
  place-items: center;
}

.pager button + button {
  border-top: 1px solid #d0d0d0;
}

.pager .dim {
  background-color: #e6e6e6;
}

.editing {
  width: 102px;
}

.editing .stack {
  padding-left: 14px;
}

.editing .caret.wide {
  margin-left: 7px;
}

.editing .caret.near {
  margin-left: -3px;
}

.netdisk {
  width: 84px;
}

.save {
  display: flex;
  flex-direction: column;
  align-items: center;
  padding-top: 15px;
}

.save svg {
  margin-bottom: 11px;
}

.tail {
  width: 78px;
  display: flex;
  align-items: flex-end;
  justify-content: flex-end;
  padding: 0 10px 4px 0;
}

.tail button {
  display: flex;
}

/* document */
.workspace {
  position: relative;
  flex: 1;
  min-height: 0;
  display: flex;
}

.desk {
  flex: 1;
  display: flex;
  justify-content: center;
  overflow: hidden;
  padding: 6px 2px 0 0;
}

.page {
  position: relative;
  flex: none;
  width: 998px;
  background-color: #fff;
  box-shadow: 0 0 0 1px #c6c6c6;
  font-family: "Noto Sans CJK SC", sans-serif;
  font-weight: 350;
  font-size: 17px;
  line-height: 26px;
  color: #000;
  white-space: nowrap;
}

.shape {
  position: absolute;
  border: 2px solid #000;
  background-color: #fff;
  padding: 5px 12px;
}

.shape.green {
  border-color: #70ad47;
  text-align: center;
  padding: 5px 0 0 12px;
}

.shape.gray {
  border-color: #7b7b7b;
  background-color: #a5a5a5;
}

.shape.gold {
  border-color: #ffc000;
}

.stack-area {
  left: 138px;
  top: 136px;
  width: 189px;
  height: 499px;
}

.rabbit {
  left: 149px;
  top: 306px;
  width: 167px;
  height: 58px;
}

.cat {
  left: 149px;
  top: 377px;
  width: 165px;
  height: 58px;
}

.dog {
  left: 151px;
  top: 439px;
  width: 163px;
  height: 58px;
}

.main-fn {
  left: 152px;
  top: 506px;
  width: 157px;
  height: 58px;
}

.shape.cat, .shape.dog, .shape.main-fn {
  padding-top: 13px;
}

.heap-top {
  left: 383px;
  top: 140px;
  width: 510px;
  height: 254px;
}

.pet-one {
  left: 406px;
  top: 144px;
  width: 171px;
  height: 119px;
}

.pet-two {
  left: 617px;
  top: 144px;
  width: 189px;
  height: 119px;
}

.pet-three {
  left: 478px;
  top: 264px;
  width: 261px;
  height: 121px;
}

.pad {
  padding-left: 9px;
}

.heap-bottom {
  left: 385px;
  top: 428px;
  width: 505px;
  height: 207px;
}

.main-area {
  left: 409px;
  top: 443px;
  width: 179px;
  height: 167px;
}

.shape.main-area {
  padding-top: 15px;
}

.deep {
  padding-left: 68px;
}

.class-area {
  left: 612px;
  top: 444px;
  width: 125px;
  height: 169px;
}

.static-area {
  left: 757px;
  top: 457px;
  width: 125px;
  height: 126px;
}

.shape.class-area, .shape.static-area {
  text-align: center;
  padding: 5px 0 0 12px;
}

.shape.static-area {
  padding-top: 8px;
}

.wrapped {
  padding-right: 14px;
}

.ret {
  width: 11px;
  height: 12px;
}

.page u {
  text-decoration: underline double #2b63d9 1px;
  text-underline-offset: 3px;
  text-decoration-skip-ink: none;
}

.page s {
  text-decoration: underline wavy #f00 1px;
  text-underline-offset: 2px;
  text-decoration-skip-ink: none;
}

.big {
  position: absolute;
  font-size: 26px;
  line-height: 36px;
}

.big .ret {
  width: 16px;
  height: 16px;
  vertical-align: 2px;
}

.method-label {
  left: 459px;
  top: 390px;
}

.stack-label {
  left: 204px;
  top: 652px;
}

.heap-label {
  left: 513px;
  top: 652px;
}

.last-mark {
  left: 150px;
  top: 703px;
}

.links {
  position: absolute;
  left: 0;
  top: 0;
}

.scroll {
  flex: none;
  width: 20px;
  display: flex;
  flex-direction: column;
  gap: 4px;
  padding: 2px 1px 2px 0;
}

.scroll button {
  display: grid;
  place-items: center;
  height: 19px;
  border: 1px solid #ababab;
  background-color: #fff;
}

.scroll .caret {
  border-width: 5px;
  border-bottom-width: 0;
}

.scroll .caret.up {
  border-width: 0 5px 5px;
  border-bottom-color: #666;
}

.track {
  flex: 1;
  background-color: #dadada;
}

.thumb {
  height: 28%;
  border: 1px solid #ababab;
  background-color: #fff;
}

.ball {
  position: absolute;
  right: 27px;
  top: -18px;
  width: 90px;
  height: 90px;
  font-family: "Noto Sans CJK SC", sans-serif;
  color: #444;
}

.load, .temp {
  position: absolute;
  line-height: 1;
}

.load {
  left: 22px;
  top: 18px;
  font-size: 30px;
  font-weight: 300;
}

.load small {
  font-size: 14px;
  font-weight: 400;
}

.temp {
  left: 37px;
  top: 55px;
  font-size: 12px;
}

/* status bar */
.status {
  flex: none;
  display: flex;
  align-items: center;
  gap: 25px;
  height: 27px;
  padding-left: 9px;
  border-top: 1px solid #c6c6c6;
  background-color: #f3f3f3;
}

.status-right {
  display: flex;
  align-items: center;
  align-self: stretch;
  margin-left: auto;
}

.upload {
  display: flex;
  align-items: center;
  gap: 3px;
  margin-right: 23px;
}

.view {
  width: 50px;
  align-self: stretch;
  display: grid;
  place-items: center;
}

.view.on {
  background-color: #c6c6c6;
}

.zoom-out {
  width: 9px;
  height: 1px;
  margin: 0 7px;
  background-color: #444;
}

.zoom-line {
  width: 17px;
  height: 1px;
  background-color: #999;
}

.ime {
  display: flex;
  align-items: center;
  align-self: stretch;
  gap: 8px;
  width: 190px;
  padding-left: 5px;
  background-color: #fff;
  color: #000;
  font-size: 19px;
  font-weight: 700;
}

.grip {
  width: 3px;
  align-self: stretch;
  border-left: 3px dotted #bbb;
}

.pin {
  border: 1px solid #333;
  font-size: 17px;
  font-weight: 400;
  line-height: 18px;
}

.more {
  margin-left: 4px;
}

/* taskbar */
.taskbar {
  flex: none;
  display: flex;
  height: 50px;
  background-color: #cddfe6;
}

.sys, .knot, .app {
  display: grid;
  place-items: center;
}

.sys {
  width: 60px;
}

.knot {
  width: 66px;
  margin-right: 4px;
}

.app {
  width: 62px;
  background: no-repeat center bottom / 51px 3px;
}

.app.open {
  background-image: linear-gradient(#0078d7, #0078d7);
}

.app.current {
  background-color: #ebf2f5;
  background-size: 62px 3px;
}

.tray {
  display: flex;
  align-items: center;
  gap: 11px;
  margin-left: auto;
  color: #111;
}

.clock {
  display: flex;
  flex-direction: column;
  align-items: center;
  width: 80px;
  padding-bottom: 2px;
}

.note {
  position: relative;
  display: flex;
  margin-left: 10px;
}

.note.last {
  padding-right: 16px;
  margin-right: 5px;
  border-right: 1px solid #a9b8be;
}

.badge {
  position: absolute;
  left: 12px;
  top: 9px;
  width: 17px;
  height: 17px;
  border-radius: 2px;
  background-color: #e60000;
  color: #fff;
  font-size: 12px;
  line-height: 17px;
  text-align: center;
}

.badge.round {
  left: 9px;
  width: 20px;
  height: 20px;
  border: 1px solid #888;
  border-radius: 50%;
  background-color: #c8d2d6;
  color: #000;
  font-size: 15px;
  font-weight: 700;
  line-height: 18px;
}
```
